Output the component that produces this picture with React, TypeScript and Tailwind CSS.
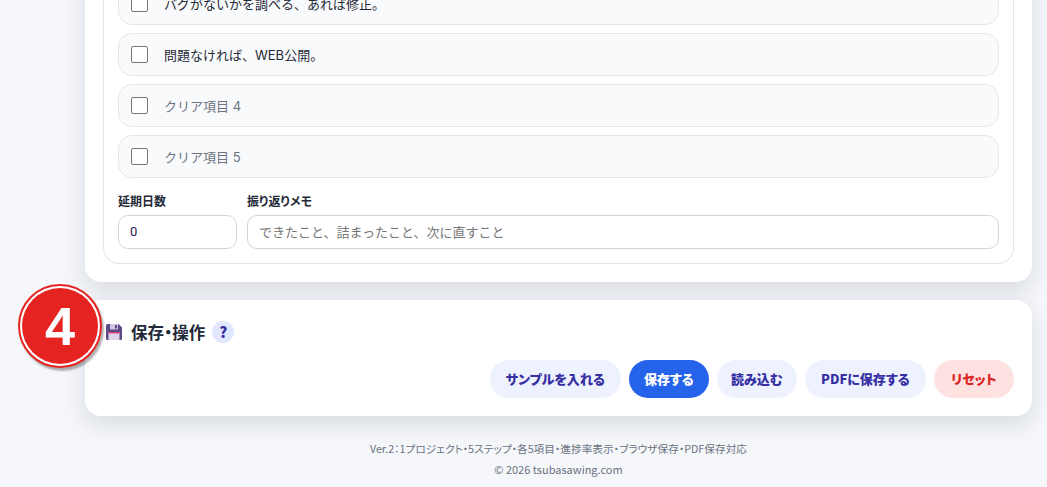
import React from 'react';

const items = [
  { label: 'バグがないかを調べる、あれば修正。', filled: true },
  { label: '問題なければ、WEB公開。', filled: true },
  { label: 'クリア項目 4', filled: false },
  { label: 'クリア項目 5', filled: false },
];

const buttons = [
  { label: 'サンプルを入れる', cls: 'w-[130.5px] bg-[#eef2ff] text-[#3730a3]' },
  { label: '保存する', cls: 'w-[80.5px] bg-[#2563eb] text-white' },
  { label: '読み込む', cls: 'w-[80px] bg-[#eef2ff] text-[#3730a3]' },
  { label: 'PDFに保存する', cls: 'w-[120.5px] bg-[#eef2ff] text-[#3730a3]' },
  { label: 'リセット', cls: 'w-[80.5px] bg-[#fee2e2] text-[#dc2626]' },
];

const FloppyIcon = () => (
  <svg width="18" height="18" viewBox="0 0 18 18" className="shrink-0">
    <path d="M1 2.5A1.5 1.5 0 0 1 2.5 1h11L17 4.5v11a1.5 1.5 0 0 1-1.5 1.5h-13A1.5 1.5 0 0 1 1 15.5z" fill="#5b4a86" />
    <rect x="5" y="1" width="8" height="5.5" fill="#cfc6e2" />
    <rect x="10" y="2" width="2" height="3.5" fill="#5b4a86" />
    <rect x="3.5" y="9" width="11" height="8" fill="#dcd3ea" />
    <rect x="3.5" y="9" width="11" height="1.4" fill="#e0356b" />
  </svg>
);

const App: React.FC = () => {
  return (
    <div className="h-[487px] overflow-hidden bg-[#f5f7fb] font-['Noto_Sans_CJK_JP','Noto_Sans',sans-serif] text-[#1f2937]">
      <div className="relative -mt-[40px] ml-[85px] mr-[15px] flex flex-col">
        {/* チェックリストのカード */}
        <div className="rounded-b-[16px] bg-white px-[18px] pb-[18px] shadow-[0_8px_24px_rgba(15,23,42,0.13)]">
          <div className="rounded-b-[16px] border border-t-0 border-[#e5e7eb] px-[14px] pb-[14px] pt-[22px]">
            <div className="flex flex-col gap-[8px]">
              {items.map((item) => (
                <label
                  key={item.label}
                  className="flex h-[43px] items-center gap-[16px] rounded-[14px] border border-[#e5e7eb] bg-[#f9fafb] pl-[12px]"
                >
                  <span className="h-[17px] w-[17px] shrink-0 rounded-[2px] border border-[#767676] bg-white" />
                  <span className={`font-['Inter','Noto_Sans_CJK_JP',sans-serif] text-[13px] leading-[20px] ${item.filled ? 'text-[#1f2937]' : 'text-[#6b7280]'}`}>{item.label}</span>
                </label>
              ))}
            </div>
            <div className="mt-[14px] flex gap-[10px]">
              <div className="w-[119px] shrink-0">
                <div className="mb-[5px] text-[12px] font-bold leading-[18px] [font-feature-settings:'palt']">延期日数</div>
                <div className="flex h-[34px] items-center rounded-[10px] border border-[#d1d5db] bg-white px-[11px] font-['Roboto',sans-serif] text-[13px] text-[#1e1b4b]">
                  0
                </div>
              </div>
              <div className="flex-1">
                <div className="mb-[5px] text-[12px] font-bold leading-[18px] [font-feature-settings:'palt']">振り返りメモ</div>
                <div className="flex h-[34px] items-center rounded-[10px] border border-[#d1d5db] bg-white px-[11px] text-[13px] leading-[20px] text-[#757575]">
                  できたこと、詰まったこと、次に直すこと
                </div>
              </div>
            </div>
          </div>
        </div>

        {/* 保存・操作 */}
        <div className="relative mt-[18px] h-[116px] rounded-[16px] bg-white px-[18px] pt-[19px] shadow-[0_8px_24px_rgba(15,23,42,0.13)]">
          <div className="flex h-[26px] items-center [font-feature-settings:'palt']">
            <span className="ml-[2px]"><FloppyIcon /></span>
            <h2 className="ml-[8px] text-[16.5px] font-bold leading-none text-[#1f2937]">保存・操作</h2>
            <span className="ml-[7px] flex h-[22px] w-[22px] items-center justify-center rounded-full bg-[#e0e7ff] text-[15px] font-black text-[#3730a3]">?</span>
          </div>
          <div className="mt-[15px] flex justify-end gap-[8px] [font-feature-settings:'palt']">
            {buttons.map((b) => (
              <button key={b.label} className={`h-[38px] rounded-full text-[13px] font-black ${b.cls}`}>
                {b.label}
              </button>
            ))}
          </div>

          <div className="absolute -left-[67px] top-[-16px] flex h-[84px] w-[84px] items-center justify-center rounded-full border-[2px] border-[#e52421] bg-white shadow-[2px_3px_2px_rgba(0,0,0,0.3)]">
            <div className="flex h-[76px] w-[76px] items-center justify-center rounded-full bg-[#e52421] font-['Liberation_Sans',sans-serif] text-[54px] font-bold leading-none text-white">
              4
            </div>
          </div>
        </div>
      </div>

      <footer className="ml-[85px] mr-[15px] mt-[23px] text-center leading-[20px] text-[#6b7280] [font-feature-settings:'palt']">
        <div className="text-[10.7px]">Ver.2：1プロジェクト・5ステップ・各5項目・進捗率表示・ブラウザ保存・PDF保存対応</div>
        <div className="text-[11px]">© 2026 tsubasawing.com</div>
      </footer>
    </div>
  );
};

export default App;
